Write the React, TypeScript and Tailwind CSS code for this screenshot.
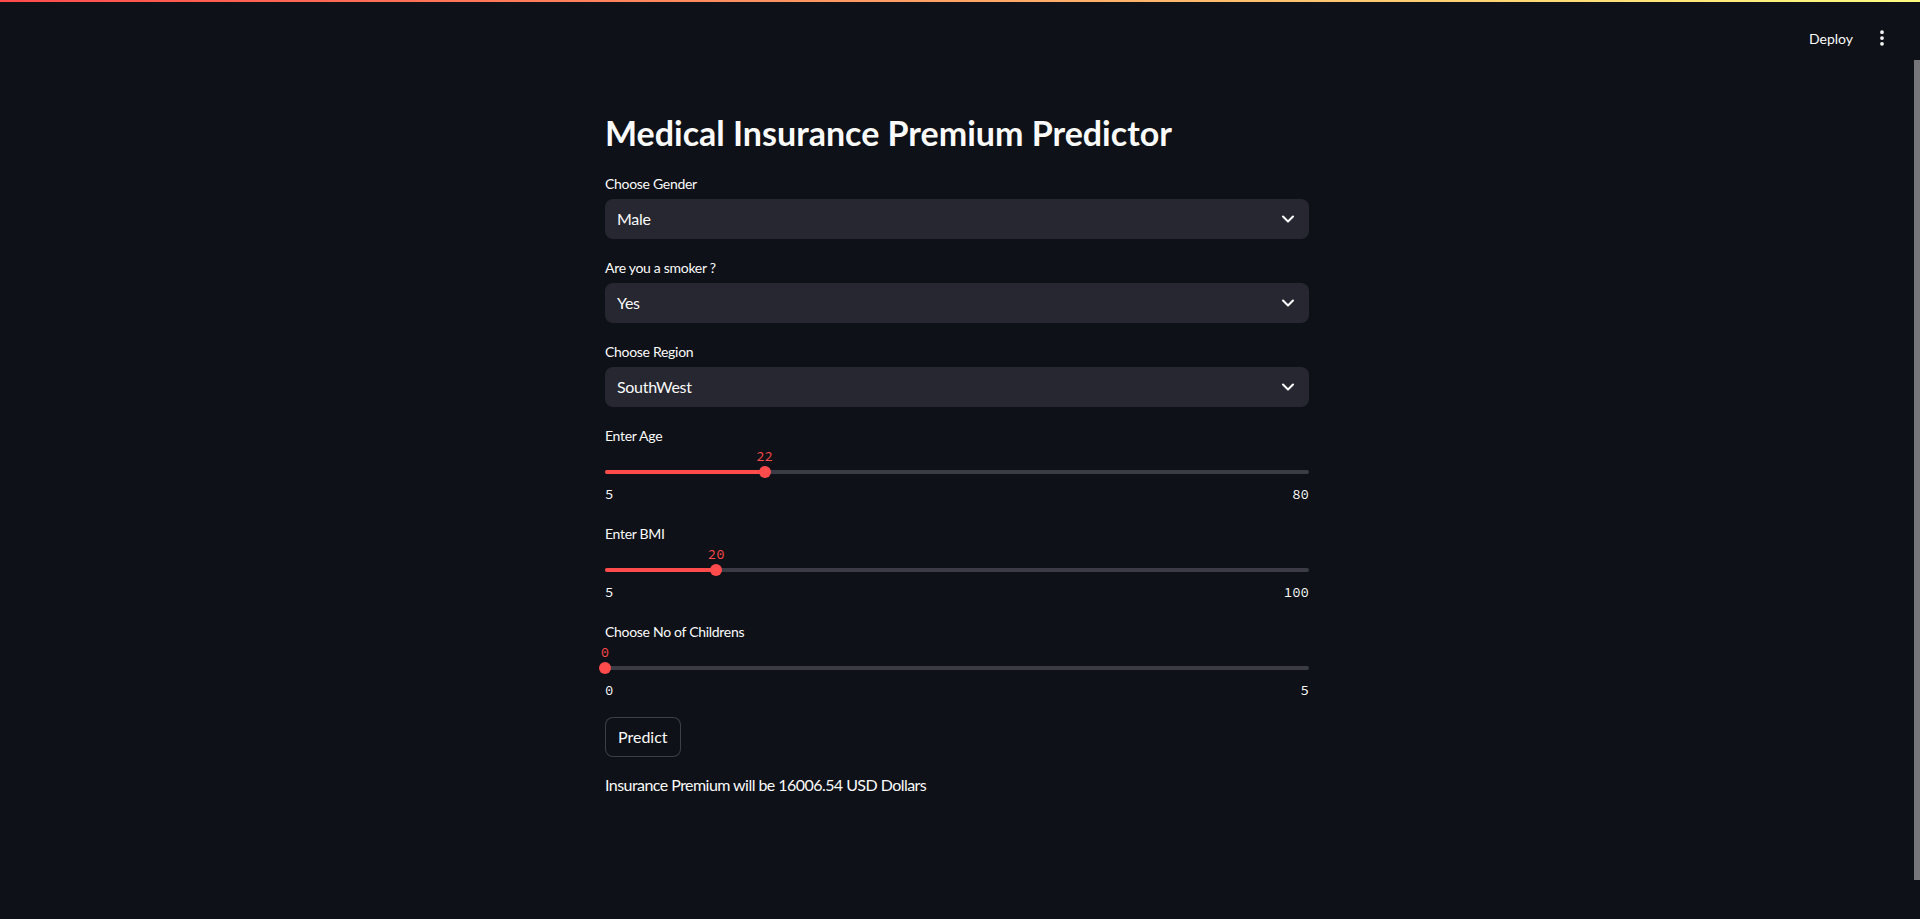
import { ChevronDown, EllipsisVertical } from "lucide-react";

const sans = "font-['Source_Sans_Pro','Lato',sans-serif]";
const mono = "font-['Source_Code_Pro','DejaVu_Sans_Mono',monospace]";

interface SelectProps {
  label: string;
  value: string;
}

const SelectBox = ({ label, value }: SelectProps) => (
  <div className="flex flex-col">
    <label className="mb-1 flex h-6 items-center text-[14px] tracking-[-0.3px] text-[#fafafa]">{label}</label>
    <div className="flex h-10 items-center justify-between rounded-lg bg-[#262730] pl-3 pr-[11px]">
      <span className="text-[16px] tracking-[-0.3px] text-[#fafafa]">{value}</span>
      <ChevronDown size={20} strokeWidth={2.5} className="text-[#fafafa]" />
    </div>
  </div>
);

interface SliderProps {
  label: string;
  min: number;
  max: number;
  value: number;
}

const Slider = ({ label, min, max, value }: SliderProps) => {
  const pct = ((value - min) / (max - min)) * 100;
  return (
    <div className="flex flex-col">
      <label className="flex h-6 items-center text-[14px] tracking-[-0.3px] text-[#fafafa]">{label}</label>
      <div className="flex h-[58px] flex-col">
        <div className="relative h-[18px]">
          <span
            className={`absolute top-0 -translate-x-1/2 text-[14px] leading-[18px] text-[#ff4b4b] ${mono}`}
            style={{ left: `${pct}%` }}
          >
            {value}
          </span>
        </div>
        <div className="relative flex h-[14px] items-center">
          <div className="h-1 w-full rounded-full bg-[#3a3b44]">
            <div className="h-1 rounded-full bg-[#ff4b4b]" style={{ width: `${pct}%` }} />
          </div>
          <div
            className="absolute top-[1px] h-3 w-3 -translate-x-1/2 rounded-full bg-[#ff4b4b]"
            style={{ left: `${pct}%` }}
          />
        </div>
        <div className={`mt-[5px] flex h-5 items-center justify-between text-[14px] text-[#fafafa] ${mono}`}>
          <span>{min}</span>
          <span>{max}</span>
        </div>
      </div>
    </div>
  );
};

export default function App() {
  return (
    <div className={`relative min-h-screen bg-[#0e1117] text-[#fafafa] ${sans}`}>
      <div className="h-[2px] bg-[linear-gradient(90deg,#ff4b4b,#fffd80)]" />
      <header className="flex h-[72px] items-center justify-end pr-[28px]">
        <span className="text-[14px] text-[#fafafa]">Deploy</span>
        <EllipsisVertical size={20} strokeWidth={2.5} className="ml-[19px] text-[#fafafa]" />
      </header>

      <main className="flex justify-center pr-[6px]">
        <div className="flex w-[704px] flex-col">
          <h1 className="mt-[39px] mb-[18px] h-10 text-[34px] font-bold leading-10 text-[#fafafa]">
            Medical Insurance Premium Predictor
          </h1>

          <div className="flex flex-col gap-4">
            <SelectBox label="Choose Gender" value="Male" />
            <SelectBox label="Are you a smoker ?" value="Yes" />
            <SelectBox label="Choose Region" value="SouthWest" />
            <Slider label="Enter Age" min={5} max={80} value={22} />
            <Slider label="Enter BMI" min={5} max={100} value={20} />
            <Slider label="Choose No of Childrens" min={0} max={5} value={0} />
            <div>
              <button
                type="button"
                className="h-10 rounded-lg border border-[rgba(250,250,250,0.2)] bg-[#0e1117] px-3 text-[16px] text-[#fafafa]"
              >
                Predict
              </button>
            </div>
            <p className="flex h-6 items-center text-[16px] tracking-[-0.55px] text-[#fafafa]">
              Insurance Premium will be 16006.54 USD Dollars
            </p>
          </div>
        </div>
      </main>

      <div className="absolute right-0 top-[60px] h-[820px] w-[6px] bg-[#76767a]" />
    </div>
  );
}
